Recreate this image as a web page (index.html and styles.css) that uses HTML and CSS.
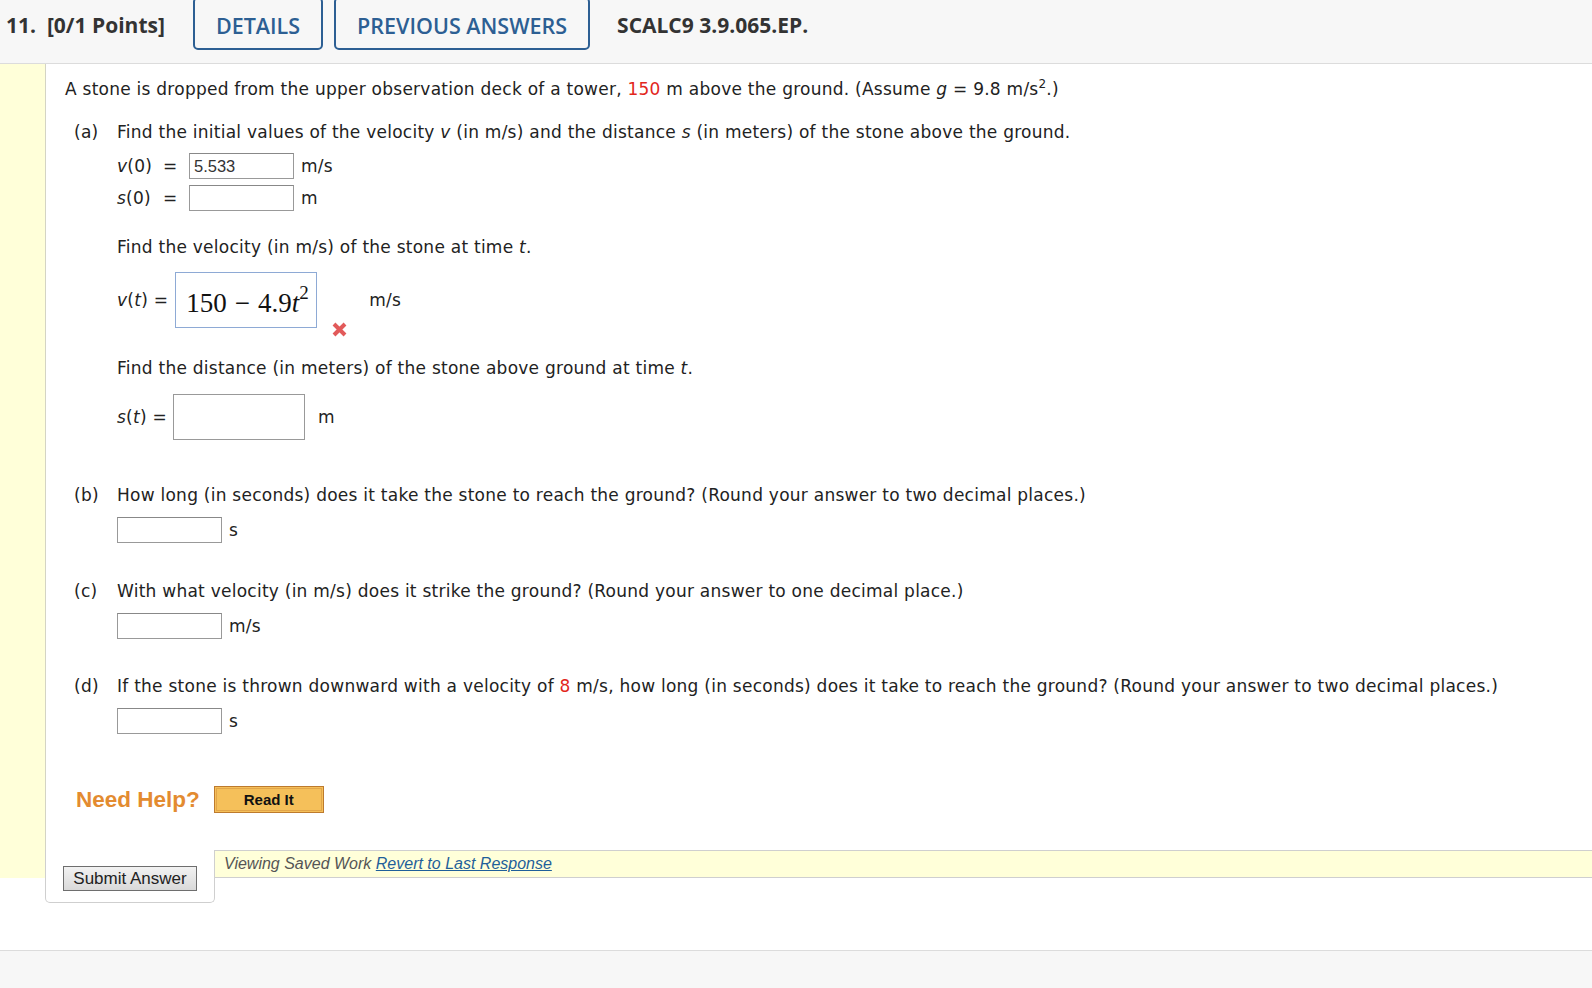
FILE: index.html
```html
<!DOCTYPE html>
<html lang="en">

<head>
    <meta charset="UTF-8">
    <meta name="viewport" content="width=device-width, initial-scale=1.0">
    <title>SCALC9 3.9.065.EP.</title>
    <link rel="stylesheet" href="styles.css">
</head>

<body>
    <div class="q-header">
        <span class="q-number">11.&nbsp; [0/1 Points]</span>
        <a class="q-tab" href="#">DETAILS</a>
        <a class="q-tab" href="#">PREVIOUS ANSWERS</a>
        <span class="q-ref">SCALC9 3.9.065.EP.</span>
    </div>

    <div class="question">
        <div class="q-strip"></div>

        <div class="q-main">
            <div class="q-content">
                <p class="intro">A stone is dropped from the upper observation deck of a tower, <span class="red">150</span> m above the ground. (Assume <i>g</i> = 9.8 m/s<sup>2</sup>.)</p>

                <!-- parte (a) -->
                <div class="part">
                    <span class="part-label">(a)</span>
                    <div class="part-body">
                        <p>Find the initial values of the velocity <i>v</i> (in m/s) and the distance <i>s</i> (in meters) of the stone above the ground.</p>

                        <div class="init-rows">
                            <div class="init-row">
                                <span class="lhs"><i>v</i>(0)</span>
                                <span class="eq">=</span>
                                <input type="text" class="answer" value="5.533">
                                <span class="unit">m/s</span>
                            </div>
                            <div class="init-row">
                                <span class="lhs"><i>s</i>(0)</span>
                                <span class="eq">=</span>
                                <input type="text" class="answer">
                                <span class="unit">m</span>
                            </div>
                        </div>

                        <p class="sub-q">Find the velocity (in m/s) of the stone at time <i>t</i>.</p>

                        <div class="math-row">
                            <span class="math-lhs"><i>v</i>(<i>t</i>) =</span>
                            <div class="math-box">
                                <span class="math-expr">150<span class="minus">&minus;</span>4.9<i>t</i><sup>2</sup></span>
                            </div>
                            <svg class="wrong" width="17" height="17" viewBox="0 0 17 17">
                                <path d="M3 3L14 14M14 3L3 14" stroke="#e25a5a" stroke-width="4" fill="none" />
                            </svg>
                            <span class="unit">m/s</span>
                        </div>

                        <p class="sub-q sub-q-dist">Find the distance (in meters) of the stone above ground at time <i>t</i>.</p>

                        <div class="math-row math-row-s">
                            <span class="math-lhs"><i>s</i>(<i>t</i>) =</span>
                            <div class="math-box math-box-empty"></div>
                            <span class="unit">m</span>
                        </div>
                    </div>
                </div>

                <!-- parte (b) -->
                <div class="part part-b">
                    <span class="part-label">(b)</span>
                    <div class="part-body">
                        <p>How long (in seconds) does it take the stone to reach the ground? (Round your answer to two decimal places.)</p>
                        <div class="single-answer">
                            <input type="text" class="answer">
                            <span class="unit">s</span>
                        </div>
                    </div>
                </div>

                <!-- parte (c) -->
                <div class="part part-c">
                    <span class="part-label">(c)</span>
                    <div class="part-body">
                        <p>With what velocity (in m/s) does it strike the ground? (Round your answer to one decimal place.)</p>
                        <div class="single-answer">
                            <input type="text" class="answer">
                            <span class="unit">m/s</span>
                        </div>
                    </div>
                </div>

                <!-- parte (d) -->
                <div class="part part-d">
                    <span class="part-label">(d)</span>
                    <div class="part-body">
                        <p>If the stone is thrown downward with a velocity of <span class="red">8</span> m/s, how long (in seconds) does it take to reach the ground? (Round your answer to two decimal places.)</p>
                        <div class="single-answer">
                            <input type="text" class="answer">
                            <span class="unit">s</span>
                        </div>
                    </div>
                </div>

                <div class="need-help">
                    <span class="need-help-title">Need Help?</span>
                    <button class="read-it"><span>Read It</span></button>
                </div>
            </div>

            <div class="q-footer">
                <div class="submit-box">
                    <button class="submit-btn">Submit Answer</button>
                </div>
                <div class="saved-bar">
                    Viewing Saved Work <a href="#">Revert to Last Response</a>
                </div>
            </div>
        </div>
    </div>

    <div class="page-bottom"></div>
</body>

</html>
```

FILE: styles.css
```css
body {
    margin: 0;
    padding: 0;
    background-color: white;
    color: #222;
    font-family: 'DejaVu Sans', Verdana, sans-serif;
    font-size: 17px;
}

/* Cabecera de la pregunta */
.q-header {
    height: 63px;
    display: flex;
    align-items: flex-start;
    padding-left: 6px;
    background-color: #f7f7f7;
    border-bottom: 1px solid #dcdcdc;
    font-family: 'Open Sans', sans-serif;
    font-weight: 700;
    font-size: 21px;
    color: #333;
}

.q-number {
    line-height: 50px;
    margin-right: 28px;
}

.q-tab {
    box-sizing: border-box;
    height: 53px;
    margin-top: -3px;
    margin-right: 11px;
    padding: 3px 21px 0;
    display: flex;
    align-items: center;
    border: 2px solid #2d5f93;
    border-radius: 5px;
    color: #2d5f93;
    font-weight: 600;
    font-size: 21.5px;
    text-decoration: none;
}

.q-ref {
    line-height: 50px;
    margin-left: 16px;
}

/* Cuerpo */
.question {
    display: flex;
}

.q-strip {
    width: 45px;
    flex-shrink: 0;
    background-color: #ffffd9;
    border-right: 1px solid #d4d4c4;
}

.q-main {
    flex: 1;
    display: flex;
    flex-direction: column;
}

.q-content {
    padding: 15px 20px 0 19px;
    letter-spacing: 0.25px;
}

p {
    margin: 0;
    line-height: 20px;
}

.red {
    color: #e2261c;
}

sup {
    font-size: 12px;
    line-height: 0;
    vertical-align: 7px;
}

.part {
    display: grid;
    grid-template-columns: 43px 1fr;
    margin-top: 23px;
    margin-left: 9px;
}

.part-label {
    line-height: 20px;
}

.answer {
    box-sizing: border-box;
    width: 105px;
    height: 26px;
    margin: 0 7px 0 0;
    padding: 0 4px;
    border: 1px solid #999;
    border-top-color: #888;
    border-radius: 0;
    font-family: 'Liberation Sans', Arial, sans-serif;
    font-size: 16.5px;
    letter-spacing: normal;
    color: #333;
    background: white;
}

.unit {
    line-height: 20px;
}

.init-rows {
    margin-top: 11px;
    display: flex;
    flex-direction: column;
    gap: 6px;
}

.init-row {
    display: flex;
    align-items: center;
}

.lhs {
    width: 46px;
}

.eq {
    width: 26px;
}

.sub-q {
    margin-top: 26px;
}

.sub-q-dist {
    margin-top: 30px;
}

.math-row {
    display: flex;
    align-items: center;
    margin-top: 15px;
}

.math-row-s {
    margin-top: 16px;
}

.math-lhs {
    margin-right: 7px;
}

.math-box {
    box-sizing: border-box;
    width: 142px;
    height: 56px;
    padding: 6px 0 0 10px;
    display: flex;
    align-items: center;
    border: 1px solid #8eaad5;
    font-family: 'Liberation Serif', 'Times New Roman', serif;
    font-size: 27px;
    letter-spacing: normal;
    color: #111;
}

.math-expr .minus {
    margin: 0 8px;
}

.math-expr sup {
    font-size: 19px;
    vertical-align: 13px;
}

.math-box-empty {
    width: 132px;
    height: 46px;
    border-color: #999;
}

.math-row-s .math-box-empty {
    margin-left: -1px;
    margin-right: 13px;
}

.wrong {
    align-self: flex-end;
    margin: 0 21px -10px 14px;
}

.single-answer {
    display: flex;
    align-items: center;
    margin-top: 12px;
}

.part-b {
    margin-top: 45px;
}

.part-c {
    margin-top: 38px;
}

.part-d {
    margin-top: 37px;
}

/* Ayuda */
.need-help {
    display: flex;
    align-items: center;
    margin-top: 52px;
    margin-left: 11px;
    letter-spacing: normal;
}

.need-help-title {
    font-family: 'Liberation Sans', Arial, sans-serif;
    font-weight: bold;
    font-size: 22.5px;
    color: #e38b30;
    margin-right: 14px;
}

.read-it {
    box-sizing: border-box;
    width: 110px;
    height: 27px;
    padding: 1px;
    background-color: #f5c05a;
    border: 1px solid #bd7a2e;
    cursor: pointer;
}

.read-it span {
    display: block;
    height: 100%;
    box-sizing: border-box;
    border: 1px solid #e2a54a;
    font-family: 'Liberation Sans', Arial, sans-serif;
    font-weight: bold;
    font-size: 15px;
    line-height: 21px;
    color: #111;
}

/* Pie de la pregunta */
.q-footer {
    display: flex;
    margin-top: 37px;
}

.submit-box {
    box-sizing: border-box;
    width: 170px;
    height: 53px;
    margin-left: -1px;
    margin-bottom: -25px;
    padding: 16px 0 0 17px;
    background-color: white;
    border: 1px solid #cfcfcf;
    border-top: none;
    border-radius: 0 0 5px 5px;
}

.submit-btn {
    box-sizing: border-box;
    width: 134px;
    height: 25px;
    padding: 0;
    background: linear-gradient(#f2f2f2, #d9d9d9);
    border: 1px solid #6e6e6e;
    border-radius: 0;
    font-family: 'Liberation Sans', Arial, sans-serif;
    font-size: 17px;
    color: #222;
}

.saved-bar {
    flex: 1;
    box-sizing: border-box;
    height: 28px;
    padding-left: 9px;
    background-color: #ffffd9;
    border-top: 1px solid #cfcfcf;
    border-bottom: 1px solid #cfcfcf;
    font-family: 'Liberation Sans', Arial, sans-serif;
    font-style: italic;
    font-size: 16px;
    line-height: 26px;
    color: #555;
}

.saved-bar a {
    color: #1f5f9a;
}

.page-bottom {
    margin-top: 72px;
    height: 40px;
    background-color: #f7f7f7;
    border-top: 1px solid #dcdcdc;
}
```
